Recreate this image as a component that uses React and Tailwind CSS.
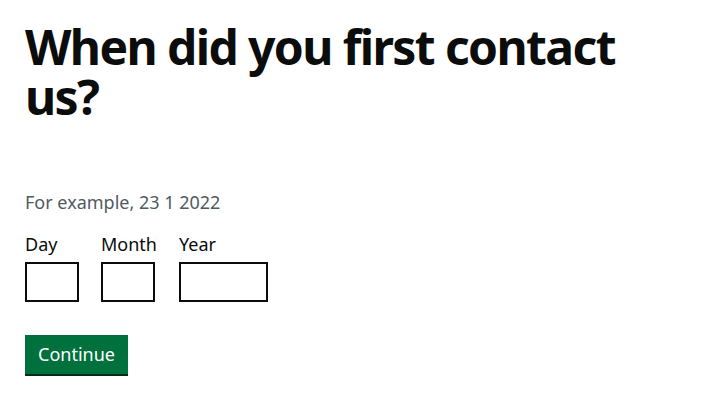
export default function App() {
  return (
    <div className="min-h-[409px] bg-white px-[25px] pt-[22px] font-['Noto_Sans',sans-serif] text-[#0b0c0c]">
      <h1 className="max-w-[620px] text-[48px] font-bold leading-[50px] tracking-[-1.6px]">
        When did you first contact us?
      </h1>

      <div className="mt-[68px] text-[18px] leading-[25px] text-[#505a5f]">
        For example, 23 1 2022
      </div>

      <div className="mt-[17px] flex gap-[22px]">
        <div className="flex flex-col">
          <label className="text-[18px] leading-[25px]">Day</label>
          <input className="mt-[5px] h-[40px] w-[54px] border-2 border-[#0b0c0c] outline-none" />
        </div>
        <div className="flex flex-col">
          <label className="text-[18px] leading-[25px]">Month</label>
          <input className="mt-[5px] h-[40px] w-[54px] border-2 border-[#0b0c0c] outline-none" />
        </div>
        <div className="flex flex-col">
          <label className="text-[18px] leading-[25px]">Year</label>
          <input className="mt-[5px] h-[40px] w-[89px] border-2 border-[#0b0c0c] outline-none" />
        </div>
      </div>

      <button className="mt-[33px] h-[39px] bg-[#00703c] px-[13px] text-[18px] leading-[25px] text-white shadow-[0_2px_0_#002d18]">
        Continue
      </button>
    </div>
  );
}
